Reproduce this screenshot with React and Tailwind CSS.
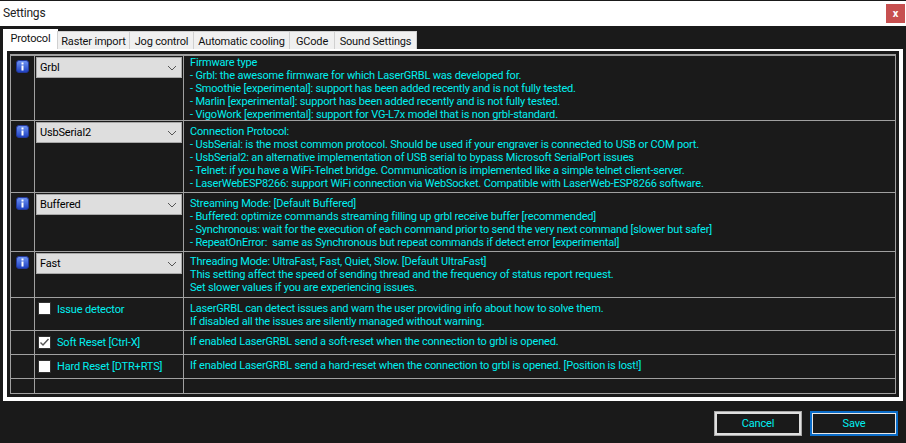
const cyan = "text-[#00f0f0]";
const Info = () => (
  <svg width="13" height="13" viewBox="0 0 13 13" className="block">
    <defs><linearGradient id="g" x1="0" y1="0" x2="0" y2="1"><stop offset="0" stopColor="#7096f5"/><stop offset="1" stopColor="#1c3fc0"/></linearGradient></defs>
    <rect x="0.5" y="0.5" width="12" height="12" rx="2.5" fill="url(#g)" stroke="#24389a"/>
    <rect x="5.5" y="2.5" width="2" height="2" fill="#fff"/>
    <rect x="5.5" y="5.5" width="2" height="5" fill="#fff"/>
  </svg>
);
const Combo = ({ v }) => (
  <div className="mt-[1px] ml-[1px] h-[21px] w-[146px] bg-[#dedede] border border-[#a8a8a8] flex items-center justify-between pl-[3px] pr-[3px] text-black">
    <span>{v}</span>
    <svg width="10" height="6" viewBox="0 0 10 6" className="mr-[1px]"><path d="M1 1l4 4 4-4" fill="none" stroke="#555" strokeWidth="1"/></svg>
  </div>
);
const Check = ({ on, label, first }) => (
  <div className={`flex items-start pl-[3px] ${first ? "pt-[4px]" : "pt-[5px]"}`}>
    <div className="w-[13px] h-[13px] bg-white border border-[#333] flex items-center justify-center">
      {on && <svg width="11" height="11" viewBox="0 0 11 11"><path d="M1.5 5.5l2.5 2.5 5.5-6" fill="none" stroke="#555" strokeWidth="1.4"/></svg>}
    </div>
    <span className={`ml-[6px] ${first ? "mt-px" : ""} ${cyan}`}>{label}</span>
  </div>
);
const rows = [
  { h: 65, t: 0, icon: true, ctl: <Combo v="Grbl" />, lines: ["Firmware type","- Grbl: the awesome firmware for which LaserGRBL was developed for.","- Smoothie [experimental]: support has been added recently and is not fully tested.","- Marlin [experimental]: support has been added recently and is not fully tested.","- VigoWork [experimental]: support for VG-L7x model that is non grbl-standard."] },
  { h: 72, t: 4, icon: true, ctl: <Combo v="UsbSerial2" />, lines: ["Connection Protocol:","- UsbSerial: is the most common protocol. Should be used if your engraver is connected to USB or COM port.","- UsbSerial2: an alternative implementation of USB serial to bypass Microsoft SerialPort issues","- Telnet: if you have a WiFi-Telnet bridge. Communication is implemented like a simple telnet client-server.","- LaserWebESP8266: support WiFi connection via WebSocket. Compatible with LaserWeb-ESP8266 software."] },
  { h: 59, t: 4, icon: true, ctl: <Combo v="Buffered" />, lines: ["Streaming Mode: [Default Buffered]","- Buffered: optimize commands streaming filling up grbl receive buffer [recommended]","- Synchronous: wait for the execution of each command prior to send the very next command [slower but safer]","- RepeatOnError:  same as Synchronous but repeat commands if detect error [experimental]"] },
  { h: 46, t: 3, icon: true, ctl: <Combo v="Fast" />, lines: ["Threading Mode: UltraFast, Fast, Quiet, Slow. [Default UltraFast]","This setting affect the speed of sending thread and the frequency of status report request.","Set slower values if you are experiencing issues."] },
  { h: 33, t: 4, ctl: <Check first label="Issue detector" />, lines: ["LaserGRBL can detect issues and warn the user providing info about how to solve them.","If disabled all the issues are silently managed without warning."] },
  { h: 24, t: 4, ctl: <Check on label="Soft Reset [Ctrl-X]" />, lines: ["If enabled LaserGRBL send a soft-reset when the connection to grbl is opened."] },
  { h: 24, t: 4, ctl: <Check label="Hard Reset [DTR+RTS]" />, lines: ["If enabled LaserGRBL send a hard-reset when the connection to grbl is opened. [Position is lost!]"] },
  { h: 14, t: 0, lines: [] },
];
const tabs = [["Raster import", "w-[73px]"],["Jog control", "w-[65px]"],["Automatic cooling", "w-[97px]"],["GCode", "w-[46px]"],["Sound Settings", "w-[83px]"]];
export default function App() {
  return (
    <div className="w-[906px] h-[443px] bg-[#1a1a1a] flex flex-col overflow-hidden text-[11px] tracking-[-0.17px] leading-[13px] font-['Roboto','Liberation_Sans',sans-serif]">
      <div className="mt-px h-[25px] bg-white flex items-center justify-between pl-[3px] pr-[1px] text-[#222] shrink-0">
        <span className="text-[12px]">Settings</span>
        <div className="w-[19px] h-[19px] bg-[#c75050] text-white flex items-center justify-center text-[11px] font-bold">x</div>
      </div>
      <div className="flex items-end h-[23px] pl-[3px] shrink-0">
        <div className="h-[20px] w-[55px] bg-white text-[#111] flex items-center justify-center pb-[1px] whitespace-nowrap">Protocol</div>
        {tabs.map(([t, w]) => (
          <div key={t} className={`${w} h-[18px] pt-px bg-[#f0f0f0] border border-[#d0d0d0] border-b-0 text-[#111] flex items-center justify-center -ml-px first:ml-0 whitespace-nowrap`}>{t}</div>
        ))}
      </div>
      <div className="mx-[3px] border-4 border-t-2 border-white h-[352px] shrink-0 bg-[#1a1a1a] pl-[3px] pr-[3px] pt-[3px]">
        <div className="border border-t-2 border-[#a0a0a0]">
          {rows.map((r, i) => (
            <div key={i} style={{ height: r.h }} className="flex border-b border-[#a0a0a0] last:border-b-0">
              <div className="w-[24px] border-r border-[#a0a0a0] pl-[5px] pt-[4px] shrink-0">{r.icon && <Info />}</div>
              <div className="w-[149px] border-r border-[#a0a0a0] shrink-0">{r.ctl}</div>
              <div style={{ paddingTop: r.t }} className={`pl-[6px] ${cyan} whitespace-pre`}>
                {r.lines.map((l, j) => <div key={j}>{l}</div>)}
              </div>
            </div>
          ))}
        </div>
      </div>
      <div className="flex justify-end gap-[8px] pt-[10px] pr-[8px]">
        <div className="w-[88px] h-[25px] border border-[#a8a8a8]">
          <div className={`h-full border-2 border-[#e0e0e0] flex items-center justify-center ${cyan}`}>Cancel</div>
        </div>
        <div className="w-[88px] h-[25px] border-2 border-[#0a6cc8]">
          <div className={`h-full border border-[#e8e8e8] flex items-center justify-center ${cyan}`}>Save</div>
        </div>
      </div>
    </div>
  );
}
